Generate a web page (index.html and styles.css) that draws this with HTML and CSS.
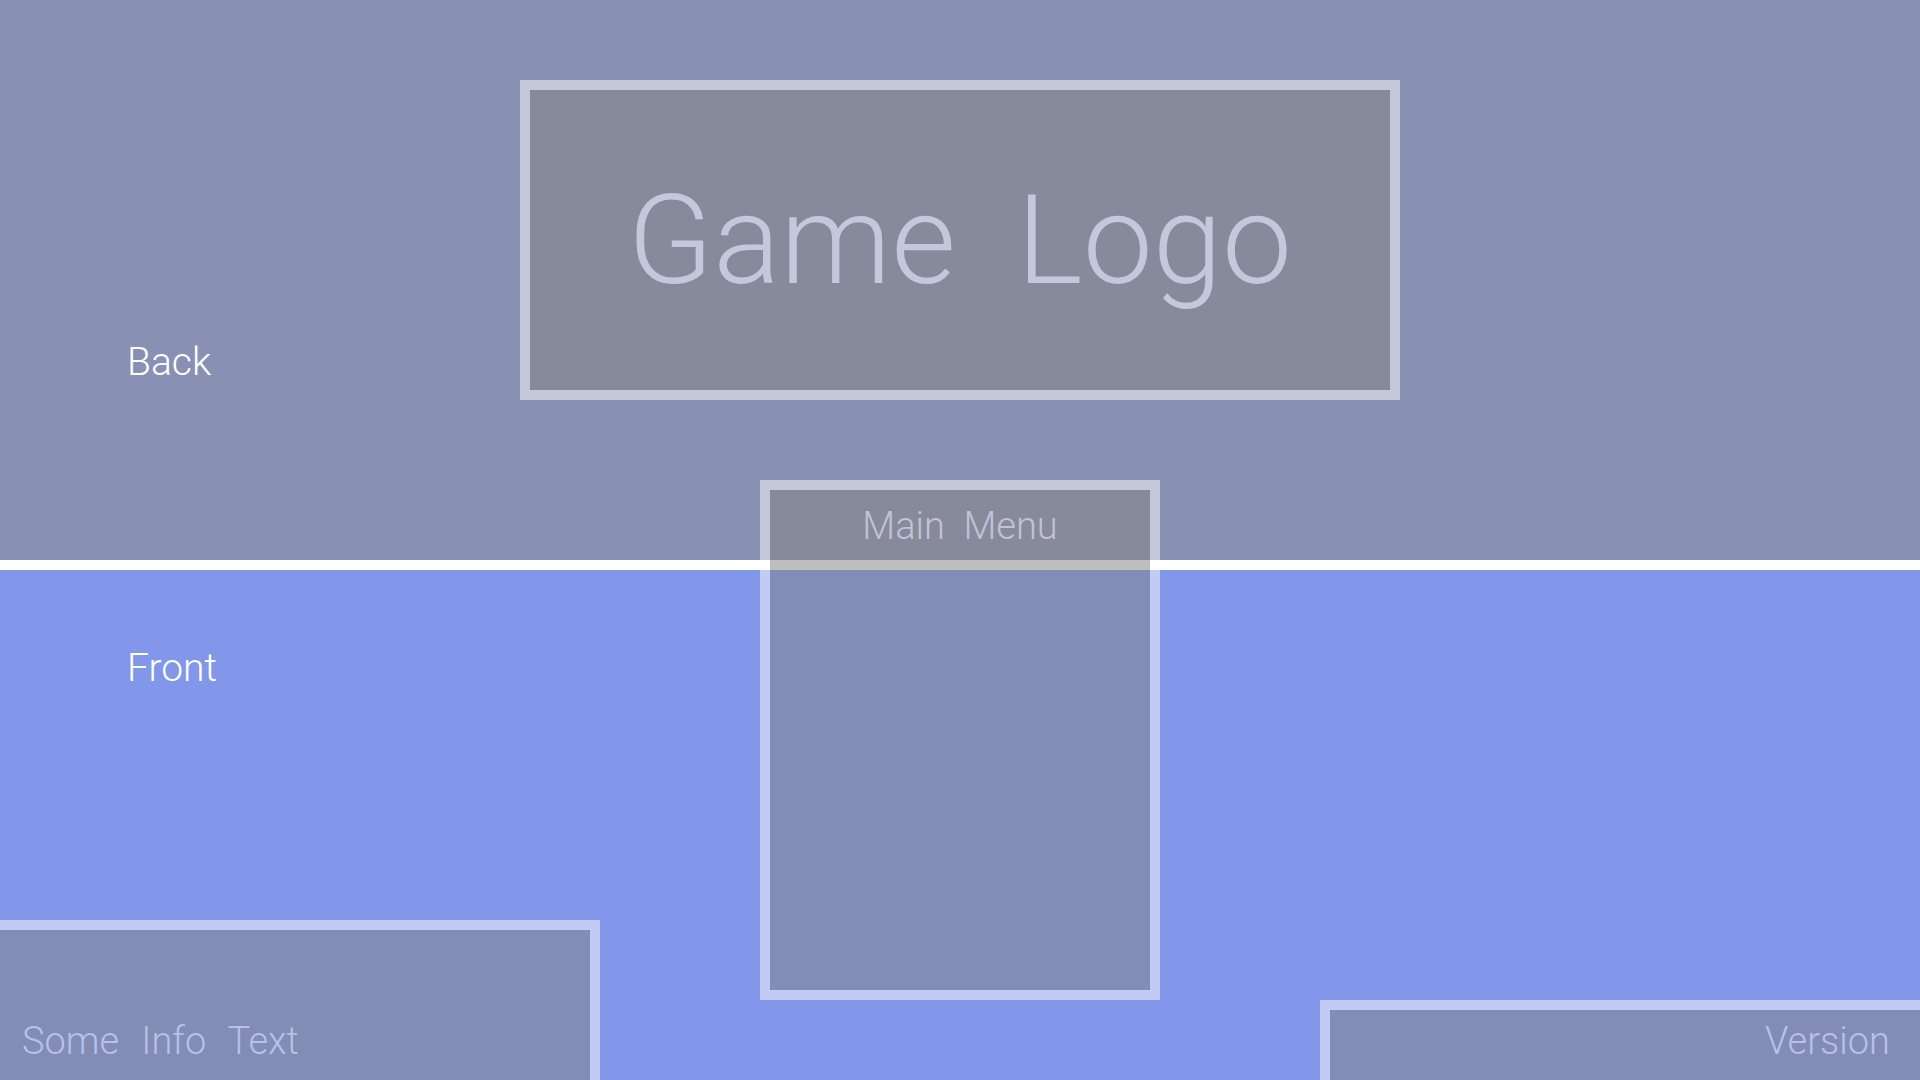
FILE: index.html
```html
<!DOCTYPE html>
<html lang="en">
<head>
<meta charset="utf-8">
<title>Game Menu Layout</title>
<link rel="stylesheet" href="styles.css">
</head>
<body>
<div class="stage">
  <section class="layer layer-back">
    <div class="layer-label back-label">Back</div>
    <div class="logo-box"><span class="logo-text">Game&nbsp; Logo</span></div>
  </section>
  <div class="divider"></div>
  <section class="layer layer-front">
    <div class="layer-label front-label">Front</div>
    <div class="panel panel-info"><span class="panel-text info-text">Some&nbsp; Info&nbsp; Text</span></div>
    <div class="panel panel-version"><span class="panel-text">Version</span></div>
  </section>
  <div class="menu-box"><div class="menu-title">Main&nbsp; Menu</div></div>
</div>
</body>
</html>
```

FILE: styles.css
```css
html, body {
  margin: 0;
  padding: 0;
}
body {
  width: 1920px;
  height: 1080px;
  overflow: hidden;
  font-family: Roboto, Inter, "Liberation Sans", sans-serif;
  font-weight: 300;
}
.stage {
  position: relative;
  width: 1920px;
  height: 1080px;
  overflow: hidden;
}
.layer-label {
  color: #ffffff;
  font-size: 39px;
  line-height: 39px;
  padding-left: 127px;
}
.layer-back {
  height: 560px;
  background: #8890b4;
  display: grid;
  grid-template-columns: 520px 880px 1fr;
  align-items: start;
  padding-top: 80px;
  box-sizing: border-box;
}
.back-label {
  margin-top: 263px;
}
.logo-box {
  width: 880px;
  height: 320px;
  box-sizing: border-box;
  border: 10px solid rgba(255, 255, 255, 0.5);
  background: rgba(133, 133, 133, 0.53);
  background-clip: padding-box;
  display: flex;
  justify-content: center;
  padding-top: 88px;
}
.logo-text {
  color: #c5c8dc;
  font-size: 125px;
  line-height: 125px;
  white-space: nowrap;
}
.divider {
  height: 10px;
  background: #ffffff;
}
.layer-front {
  height: 510px;
  background: #8296ea;
  display: grid;
  grid-template-columns: 600px 1fr 600px;
  grid-template-rows: auto 1fr;
}
.front-label {
  grid-column: 1;
  grid-row: 1;
  margin-top: 79px;
}
.panel {
  grid-row: 2;
  align-self: end;
  box-sizing: border-box;
  background: rgba(133, 133, 133, 0.53);
  background-clip: padding-box;
  border-color: rgba(255, 255, 255, 0.5);
  border-style: solid;
  display: flex;
  align-items: flex-end;
  padding-bottom: 20px;
}
.panel-info {
  grid-column: 1;
  height: 160px;
  border-width: 10px 10px 0 0;
  padding-left: 22px;
}
.panel-version {
  grid-column: 3;
  height: 80px;
  border-width: 10px 0 0 10px;
  justify-content: flex-end;
  padding-right: 30px;
}
.panel-text {
  color: #b7c0ea;
  font-size: 38px;
  line-height: 38px;
  white-space: nowrap;
}
.info-text {
  word-spacing: 1.8px;
}
.menu-box {
  position: absolute;
  left: 760px;
  top: 480px;
  width: 400px;
  height: 520px;
  box-sizing: border-box;
  border: 10px solid rgba(255, 255, 255, 0.5);
  background: rgba(133, 133, 133, 0.53);
  background-clip: padding-box;
  display: flex;
  justify-content: center;
  align-items: flex-start;
  padding-top: 17px;
}
.menu-title {
  color: #c0c3d6;
  font-size: 38px;
  line-height: 38px;
  white-space: nowrap;
}
```
